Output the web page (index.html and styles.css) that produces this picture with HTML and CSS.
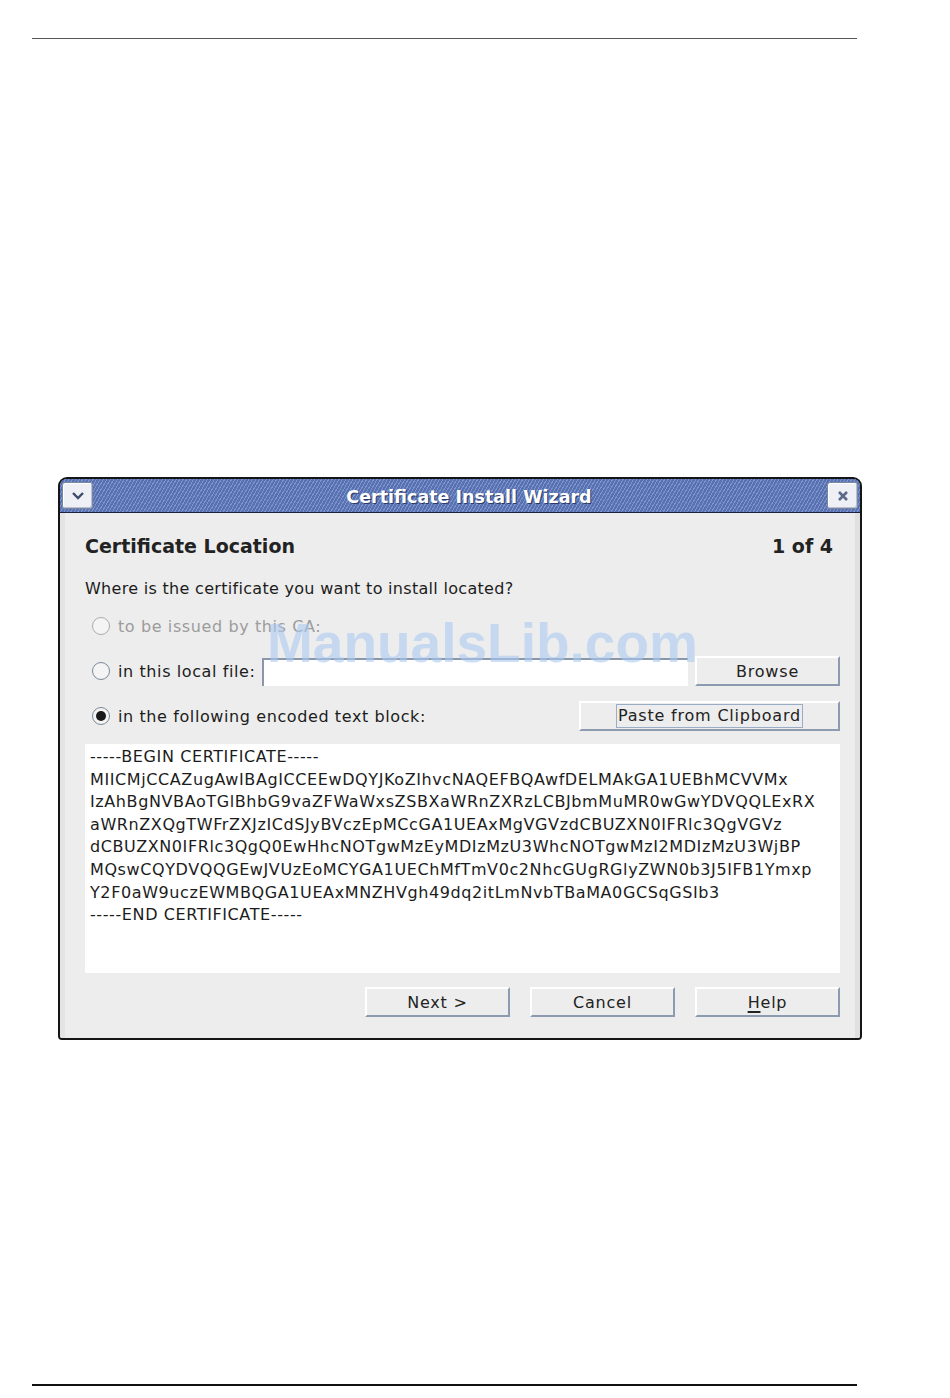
FILE: index.html
```html
<!DOCTYPE html>
<html>
<head>
<meta charset="UTF-8">
<title>Certificate Install Wizard</title>
<link rel="stylesheet" href="styles.css">
</head>
<body>
	<div class="rule top"></div>

	<div class="window">
		<div class="titlebar">
			<div class="tbtn">
				<svg width="14" height="10" viewBox="0 0 14 10"><path d="M2 2 L7 7 L12 2" fill="none" stroke="#3c4c6c" stroke-width="2.4"/></svg>
			</div>
			<div class="wtitle">Certificate Install Wizard</div>
			<div class="tbtn">
				<svg width="12" height="12" viewBox="0 0 12 12"><path d="M2 2 L10 10 M10 2 L2 10" fill="none" stroke="#5a6a88" stroke-width="2.6"/></svg>
			</div>
		</div>

		<div class="content">
			<div class="head">
				<span>Certificate Location</span>
				<span>1 of 4</span>
			</div>
			<div class="question">Where is the certificate you want to install located?</div>

			<div class="row">
				<span class="radio disabled"></span>
				<span class="label grey">to be issued by this CA:</span>
			</div>
			<div class="row">
				<span class="radio"></span>
				<span class="label">in this local file:</span>
				<span class="field"></span>
				<span class="button browse">Browse</span>
			</div>
			<div class="row">
				<span class="radio on"></span>
				<span class="label">in the following encoded text block:</span>
				<span class="button paste"><span class="focus">Paste from Clipboard</span></span>
			</div>

			<pre class="cert">-----BEGIN CERTIFICATE-----
MIICMjCCAZugAwIBAgICCEEwDQYJKoZIhvcNAQEFBQAwfDELMAkGA1UEBhMCVVMx
IzAhBgNVBAoTGlBhbG9vaZFWaWxsZSBXaWRnZXRzLCBJbmMuMR0wGwYDVQQLExRX
aWRnZXQgTWFrZXJzICdSJyBVczEpMCcGA1UEAxMgVGVzdCBUZXN0IFRlc3QgVGVz
dCBUZXN0IFRlc3QgQ0EwHhcNOTgwMzEyMDIzMzU3WhcNOTgwMzI2MDIzMzU3WjBP
MQswCQYDVQQGEwJVUzEoMCYGA1UEChMfTmV0c2NhcGUgRGlyZWN0b3J5IFB1Ymxp
Y2F0aW9uczEWMBQGA1UEAxMNZHVgh49dq2itLmNvbTBaMA0GCSqGSIb3
-----END CERTIFICATE-----</pre>

			<div class="buttons">
				<span class="button">Next &gt;</span>
				<span class="button">Cancel</span>
				<span class="button"><u>H</u>elp</span>
			</div>
		</div>
	</div>

	<div class="watermark">ManualsLib.com</div>

	<div class="rule bottom"></div>
</body>
</html>
```

FILE: styles.css
```css
/* page */
body {
	margin: 0;
	width: 950px;
	height: 1398px;
	background: white;
	font-family: "DejaVu Sans", sans-serif;
	color: #1c1c1c;
	position: relative;
}

.rule {
	margin-left: 32px;
	width: 825px;
}

.rule.top {
	padding-top: 38px;
	border-bottom: 1px solid #555555;
}

.rule.bottom {
	margin-top: 344px;
	border-top: 2px solid #111111;
}

/* window */
.window {
	box-sizing: border-box;
	margin: 438px 0 0 58px;
	width: 804px;
	border: 2px solid #151515;
	border-radius: 9px 9px 4px 4px;
	background: #ededed;
	overflow: hidden;
}

.titlebar {
	height: 33px;
	display: flex;
	align-items: center;
	border-bottom: 1px solid #1a2440;
	background-color: #5871b0;
	background-image: repeating-linear-gradient(-60deg, #5871b0 0px, #5871b0 2px, #7d93c9 2px, #7d93c9 3px);
}

.tbtn {
	width: 29px;
	height: 25px;
	margin: 0 2px;
	border: 1px solid #7a86a0;
	border-radius: 3px;
	background: #eef0f6;
	box-shadow: inset 1px 1px 0 white, inset -1px -1px 0 #b8c0d4;
	display: flex;
	align-items: center;
	justify-content: center;
}

.wtitle {
	flex: 1;
	text-align: center;
	color: white;
	font-weight: bold;
	font-size: 17.5px;
	padding: 2px 0 0 18px;
	text-shadow: 1px 1px 0 #2a3a66;
}

.content {
	padding: 22px 15px 21px 20px;
	border-left: 5px solid #e4e4e4;
	border-right: 5px solid #e0e0e0;
}

.head {
	display: flex;
	justify-content: space-between;
	font-weight: bold;
	font-size: 19px;
	color: #222222;
	padding-right: 7px;
}

.question {
	margin-top: 22px;
	font-size: 16px;
	letter-spacing: 0.3px;
}

.row {
	display: flex;
	align-items: center;
	height: 30px;
	margin-top: 13px;
	font-size: 16px;
	letter-spacing: 0.6px;
	white-space: nowrap;
}

.row + .row {
	margin-top: 15px;
}

.radio {
	flex: none;
	width: 16px;
	height: 16px;
	margin-left: 7px;
	border: 1.5px solid #7c8898;
	border-radius: 50%;
	background: #f4f4f4;
	box-sizing: content-box;
	position: relative;
}

.radio.disabled {
	border-color: #acacac;
}

.radio.on::after {
	content: "";
	position: absolute;
	left: 3px;
	top: 3px;
	width: 10px;
	height: 10px;
	border-radius: 50%;
	background: #1a1a1a;
}

.label {
	margin-left: 8px;
}

.grey {
	color: #9c9c9c;
}

.field {
	flex: none;
	box-sizing: border-box;
	width: 426px;
	height: 28px;
	margin-left: 7px;
	margin-top: 2px;
	background: white;
	border-top: 2px solid #8a97aa;
	border-left: 2px solid #8a97aa;
}

.button {
	flex: none;
	display: flex;
	align-items: center;
	justify-content: center;
	box-sizing: border-box;
	width: 145px;
	height: 30px;
	background: #ededed;
	border-top: 2px solid white;
	border-left: 2px solid white;
	border-right: 2px solid #8c9bb0;
	border-bottom: 2px solid #8c9bb0;
	font-size: 16px;
	letter-spacing: 0.8px;
	color: #222222;
}

.browse {
	margin-left: auto;
}

.paste {
	width: 261px;
	margin-left: auto;
}

.focus {
	border: 1px solid #9aacc6;
	padding: 0 1px;
	line-height: 22px;
}

.cert {
	margin: 13px 0 0 0;
	height: 223px;
	padding: 2px 5px 4px;
	background: white;
	font-family: "DejaVu Sans", sans-serif;
	font-size: 16px;
	line-height: 22.6px;
	letter-spacing: 0.6px;
	color: #1c1c1c;
	white-space: pre;
	overflow: hidden;
}

.buttons {
	display: flex;
	justify-content: flex-end;
	gap: 20px;
	margin-top: 14px;
}

.buttons u {
	text-decoration-thickness: 2px;
	text-underline-offset: 3px;
}

/* watermark over the dialog */
.watermark {
	position: absolute;
	left: 267px;
	top: 611px;
	font-family: "Liberation Sans", Arial, sans-serif;
	font-weight: bold;
	font-size: 55px;
	color: rgba(170, 202, 240, 0.6);
}
```
